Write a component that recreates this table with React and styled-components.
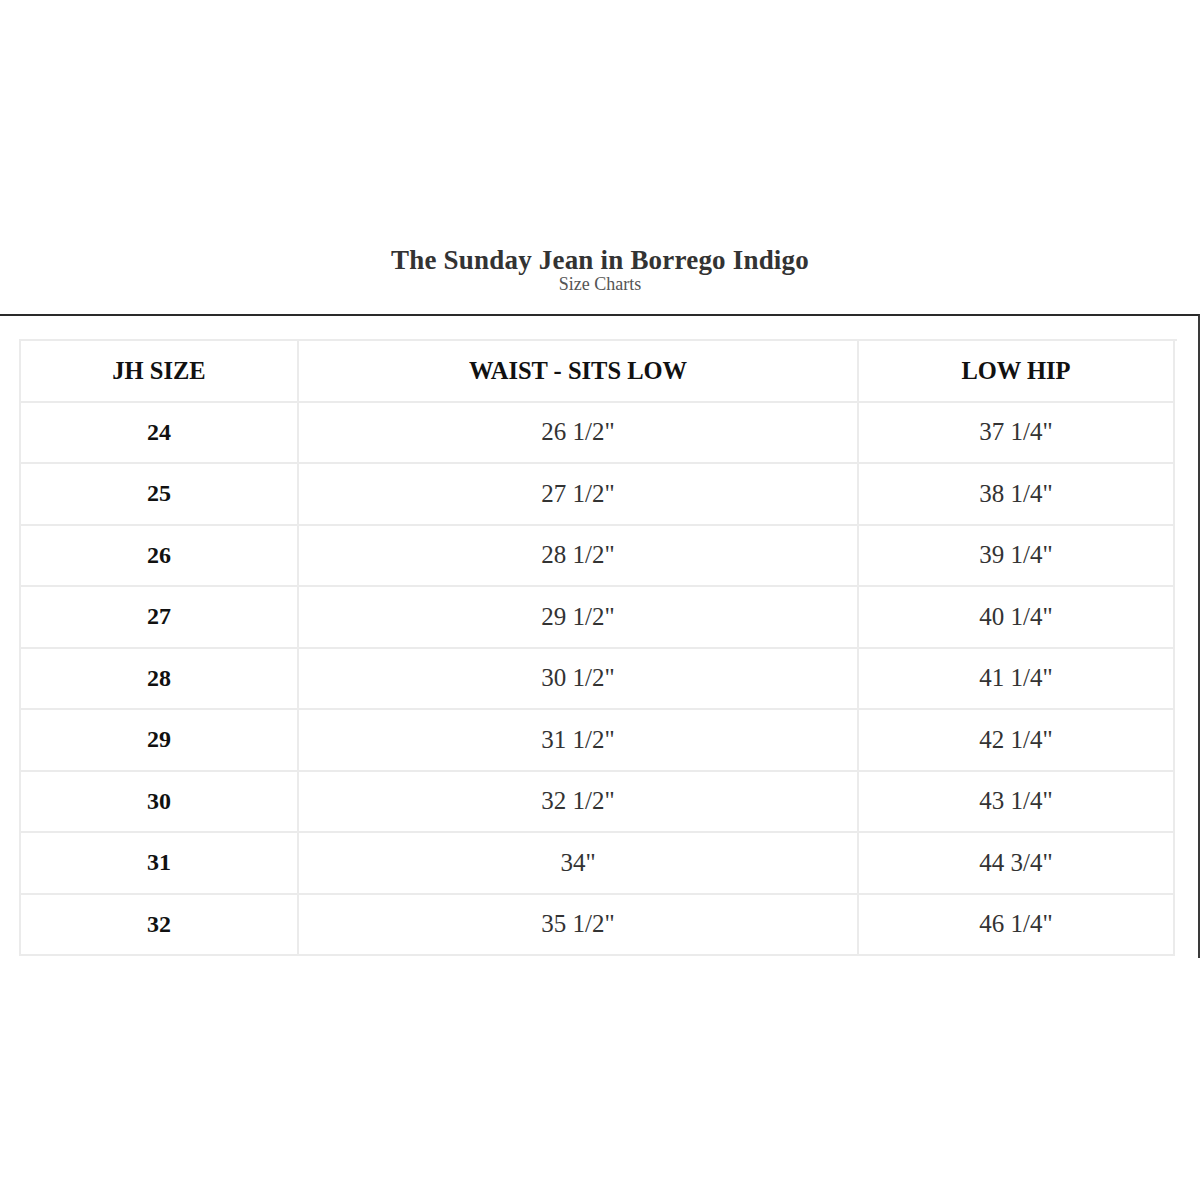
import React from "react";
import styled, { createGlobalStyle } from "styled-components";

const GlobalStyle = createGlobalStyle`
  html, body {
    margin: 0;
    padding: 0;
    background: #fff;
  }
  body {
    font-family: "Liberation Serif", "DejaVu Serif", serif;
    color: #222;
  }
`;

const rows = [
  ["24", '26 1/2"', '37 1/4"'],
  ["25", '27 1/2"', '38 1/4"'],
  ["26", '28 1/2"', '39 1/4"'],
  ["27", '29 1/2"', '40 1/4"'],
  ["28", '30 1/2"', '41 1/4"'],
  ["29", '31 1/2"', '42 1/4"'],
  ["30", '32 1/2"', '43 1/4"'],
  ["31", '34"', '44 3/4"'],
  ["32", '35 1/2"', '46 1/4"'],
];

export default function App() {
  return (
    <>
      <GlobalStyle />
      <Page>
        <Heading>
          <Title>The Sunday Jean in Borrego Indigo</Title>
          <Subtitle>Size Charts</Subtitle>
        </Heading>
        <Frame>
          <Chart>
            <Cell head>JH SIZE</Cell>
            <Cell head>WAIST - SITS LOW</Cell>
            <Cell head>LOW HIP</Cell>
            {rows.map(([size, waist, hip]) => (
              <React.Fragment key={size}>
                <Cell bold>{size}</Cell>
                <Cell>{waist}</Cell>
                <Cell>{hip}</Cell>
              </React.Fragment>
            ))}
          </Chart>
        </Frame>
      </Page>
    </>
  );
}

const Page = styled.div`
  width: 1200px;
  height: 1200px;
  padding-top: 244px;
  box-sizing: border-box;
`;

const Heading = styled.div`
  text-align: center;
  height: 70px;
`;

const Title = styled.h1`
  margin: 0;
  font-size: 27px;
  line-height: 32px;
  font-weight: 700;
  color: #333;
  letter-spacing: 0.2px;
`;

const Subtitle = styled.div`
  font-size: 18px;
  line-height: 20px;
  color: #555;
  margin-top: -2px;
`;

const Frame = styled.div`
  width: 1200px;
  box-sizing: border-box;
  border-top: 2px solid #2a2a2a;
  border-right: 2px solid #3a3a3a;
  padding: 23px 0 2px 19px;
`;

const Chart = styled.div`
  display: grid;
  grid-template-columns: 278px 560px 316px;
  grid-auto-rows: 61.5px;
  width: 1156px;
  border-top: 2px solid #ebebeb;
  border-left: 2px solid #ebebeb;
`;

const Cell = styled.div`
  display: flex;
  align-items: center;
  justify-content: center;
  box-sizing: border-box;
  border-right: 2px solid #ebebeb;
  border-bottom: 2px solid #ebebeb;
  font-size: ${({ head, bold }) => (head ? "24.5px" : bold ? "24px" : "25px")};
  font-weight: ${({ head, bold }) => (head || bold ? 700 : 400)};
  color: ${({ head, bold }) => (head || bold ? "#111" : "#333")};
`;
